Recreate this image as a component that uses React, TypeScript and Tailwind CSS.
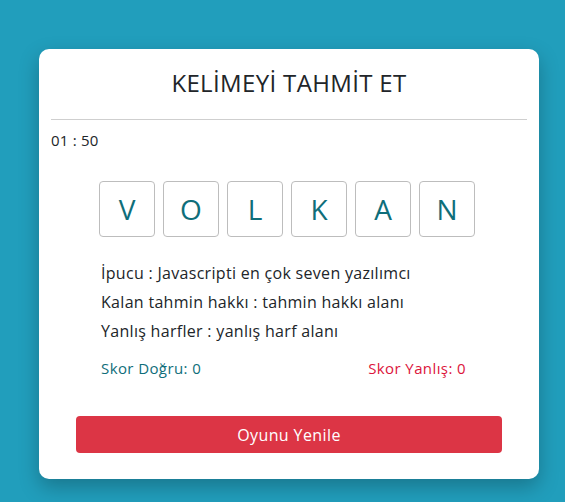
const letters = ['V', 'O', 'L', 'K', 'A', 'N']

export default function App() {
  return (
    <div className="min-h-screen w-full bg-[#219ebc] pt-[49px] pl-[39px] font-['Open_Sans',sans-serif] text-[#212529]">
      <div className="w-[500px] rounded-[10px] bg-white px-3 pt-4 pb-[26px] shadow-[0_8px_20px_rgba(0,0,0,0.25)]">
        <h1 className="text-center text-[24px] leading-[36px] font-medium tracking-[0.35px]">KELİMEYİ TAHMİT ET</h1>
        <hr className="mt-[18px] border-t border-[#cfcfcf]" />
        <div className="mt-2 text-[15px] leading-[24px] tracking-[0.2px]">01 : 50</div>
        <div className="mt-[29px] flex justify-center gap-2 pr-1">
          {letters.map((l, i) => (
            <div
              key={i}
              className="flex h-14 w-14 items-center justify-center rounded-[4px] border border-[#bdbdbd] text-[28px] font-medium text-[#0f6e7a]"
            >
              {l}
            </div>
          ))}
        </div>
        <div className="mt-[22px] pl-[50px] pr-[61px] text-[16px] tracking-[0.3px]">
          <p className="leading-[29px]">İpucu : Javascripti en çok seven yazılımcı</p>
          <p className="leading-[29px]">Kalan tahmin hakkı : tahmin hakkı alanı</p>
          <p className="leading-[29px]">Yanlış harfler : yanlış harf alanı</p>
          <div className="mt-[10px] flex justify-between text-[15px] leading-[24px] tracking-[0.4px]">
            <span className="text-[#0f6e7a]">Skor Doğru: 0</span>
            <span className="text-[#dc143c]">Skor Yanlış: 0</span>
          </div>
        </div>
        <button className="mx-[25px] mt-9 flex h-[37px] w-[426px] items-center justify-center rounded-[4px] bg-[#dc3545] text-[16px] tracking-[0.4px] text-white">
          Oyunu Yenile
        </button>
      </div>
    </div>
  )
}
